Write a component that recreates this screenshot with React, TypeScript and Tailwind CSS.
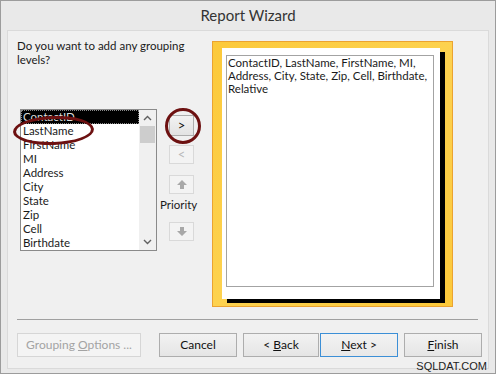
import React from "react";

const fields = ["ContactID", "LastName", "FirstName", "MI", "Address", "City", "State", "Zip", "Cell", "Birthdate"];

function SmallBtn({ children, disabled, className = "" }: { children: React.ReactNode; disabled?: boolean; className?: string }) {
  return (
    <div
      className={
        "w-[25px] flex items-center justify-center border " +
        (disabled
          ? "border-[#d9d9d9] bg-[#f3f3f3] text-[#b8b8b8]"
          : "border-[#adadad] bg-gradient-to-b from-[#f2f2f2] to-[#e3e3e3] text-[#111]") +
        " " +
        className
      }
    >
      {children}
    </div>
  );
}

function Arrow({ down }: { down?: boolean }) {
  return (
    <svg width="10" height="9" viewBox="0 0 10 9" className={down ? "rotate-180" : ""}>
      <path d="M5 0 L10 5 L7 5 L7 9 L3 9 L3 5 L0 5 Z" fill="#a8a8a8" />
    </svg>
  );
}

function WizBtn({
  children,
  w,
  disabled,
  focused,
}: {
  children: React.ReactNode;
  w: string;
  disabled?: boolean;
  focused?: boolean;
}) {
  return (
    <div
      className={
        w +
        " h-[24px] flex items-center justify-center border text-[12px] whitespace-nowrap " +
        (disabled
          ? "border-[#d6d6d6] bg-[#f4f4f4] text-[#a3a3a3]"
          : focused
          ? "border-[#3c8fd6] bg-gradient-to-b from-[#f3f3f3] to-[#e8e8e8] text-[#111]"
          : "border-[#adadad] bg-gradient-to-b from-[#f2f2f2] to-[#e5e5e5] text-[#111]")
      }
    >
      {children}
    </div>
  );
}

export default function App() {
  return (
    <div className="relative w-[496px] h-[374px] overflow-hidden border border-[#9c9c9c] bg-[#e9e9e9] font-['Lato',sans-serif] text-[#1a1a1a]">
      {/* title */}
      <div className="h-[29px] flex items-center justify-center text-[15px] text-[#333]">Report Wizard</div>

      {/* main panel */}
      <div className="ml-[6px] w-[482px] h-[339px] border border-[#dadada] bg-[#f0f0f0]">
        <div className="flex">
          <div className="w-[204px]">
            <div className="pl-[9px] pt-[8px] text-[11.5px] leading-[14px]">
              Do you want to add any grouping
              <br />
              levels?
            </div>

            <div className="mt-[42px] ml-[12px] flex items-start">
              {/* listbox */}
              <div className="w-[137px] h-[142px] border border-[#8a8a8a] bg-white flex">
                <div className="w-[118px] text-[11.5px] leading-[14px]">
                  {fields.map((f, i) => (
                    <div
                      key={f}
                      className={
                        "h-[14px] pl-[2px] whitespace-nowrap " +
                        (i === 0 ? "bg-black text-[#ddd] outline-1 outline-dotted outline-[#888] -outline-offset-1" : "")
                      }
                    >
                      {f}
                    </div>
                  ))}
                </div>
                <div className="w-[17px] bg-[#f0f0f0] flex flex-col items-center">
                  <div className="h-[16px] flex items-center justify-center">
                    <svg width="9" height="6" viewBox="0 0 9 6">
                      <polyline points="1,5 4.5,1.5 8,5" fill="none" stroke="#606060" strokeWidth="1.4" />
                    </svg>
                  </div>
                  <div className="w-[15px] h-[17px] bg-[#cdcdcd]" />
                  <div className="flex-1" />
                  <div className="h-[16px] flex items-center justify-center">
                    <svg width="9" height="6" viewBox="0 0 9 6">
                      <polyline points="1,1 4.5,4.5 8,1" fill="none" stroke="#606060" strokeWidth="1.4" />
                    </svg>
                  </div>
                </div>
              </div>

              {/* move / priority buttons */}
              <div className="ml-[12px] w-[25px] flex flex-col">
                <SmallBtn className="mt-[6px] h-[21px] text-[13px]">&gt;</SmallBtn>
                <SmallBtn disabled className="mt-[9px] h-[19px] text-[13px]">&lt;</SmallBtn>
                <SmallBtn disabled className="mt-[11px] h-[19px]">
                  <Arrow />
                </SmallBtn>
                <div className="mt-[4px] -ml-[9px] h-[14px] text-[11.5px] leading-[14px] whitespace-nowrap">Priority</div>
                <SmallBtn disabled className="mt-[10px] h-[19px]">
                  <Arrow down />
                </SmallBtn>
              </div>
            </div>
          </div>

          {/* preview frame */}
          <div className="mt-[10px] w-[241px] h-[266px] border border-[#eba331] bg-gradient-to-br from-[#fcc93a] via-[#fdd24f] to-[#fcc93a] pl-[9px] pt-[6px]">
            <div className="w-[218px] h-[251px] bg-white shadow-[5px_4px_0_0_#000] pl-[4px] pt-[7px]">
              <div className="w-[208px] h-[232px] border border-[#a3a3a3] bg-white px-[1px] text-[11.5px] leading-[13px] whitespace-nowrap">
                ContactID, LastName, FirstName, MI,
                <br />
                Address, City, State, Zip, Cell, Birthdate,
                <br />
                Relative
              </div>
            </div>
          </div>
        </div>

        <div className="mt-[12px] ml-[9px] w-[461px] h-px bg-[#a0a0a0]" />

        <div className="mt-[13px] ml-[9px] flex">
          <WizBtn w="w-[124px]" disabled>
            Grouping <span className="underline ml-[3px]">O</span>ptions ...
          </WizBtn>
          <div className="ml-[18px]">
            <WizBtn w="w-[78px]">Cancel</WizBtn>
          </div>
          <div className="ml-[6px]">
            <WizBtn w="w-[76px]">
              &lt; <span className="underline ml-[3px]">B</span>ack
            </WizBtn>
          </div>
          <div className="ml-[1px]">
            <WizBtn w="w-[78px]" focused>
              <span className="underline">N</span>ext &gt;
            </WizBtn>
          </div>
          <div className="ml-[6px]">
            <WizBtn w="w-[78px]">
              <span className="underline">F</span>inish
            </WizBtn>
          </div>
        </div>
      </div>

      {/* annotation circles */}
      <div className="absolute left-[12px] top-[115px] w-[81px] h-[29px] rounded-[50%] border-[3px] border-[#6d1111] -rotate-2" />
      <div className="absolute left-[164px] top-[107px] w-[36px] h-[36px] rounded-full border-[3px] border-[#6d1111]" />

      {/* watermark */}
      <div className="absolute right-[8px] bottom-[0px] text-[11px] leading-[13px] text-[#222] font-['Liberation_Sans',sans-serif]">
        SQLDAT.COM
      </div>
    </div>
  );
}
